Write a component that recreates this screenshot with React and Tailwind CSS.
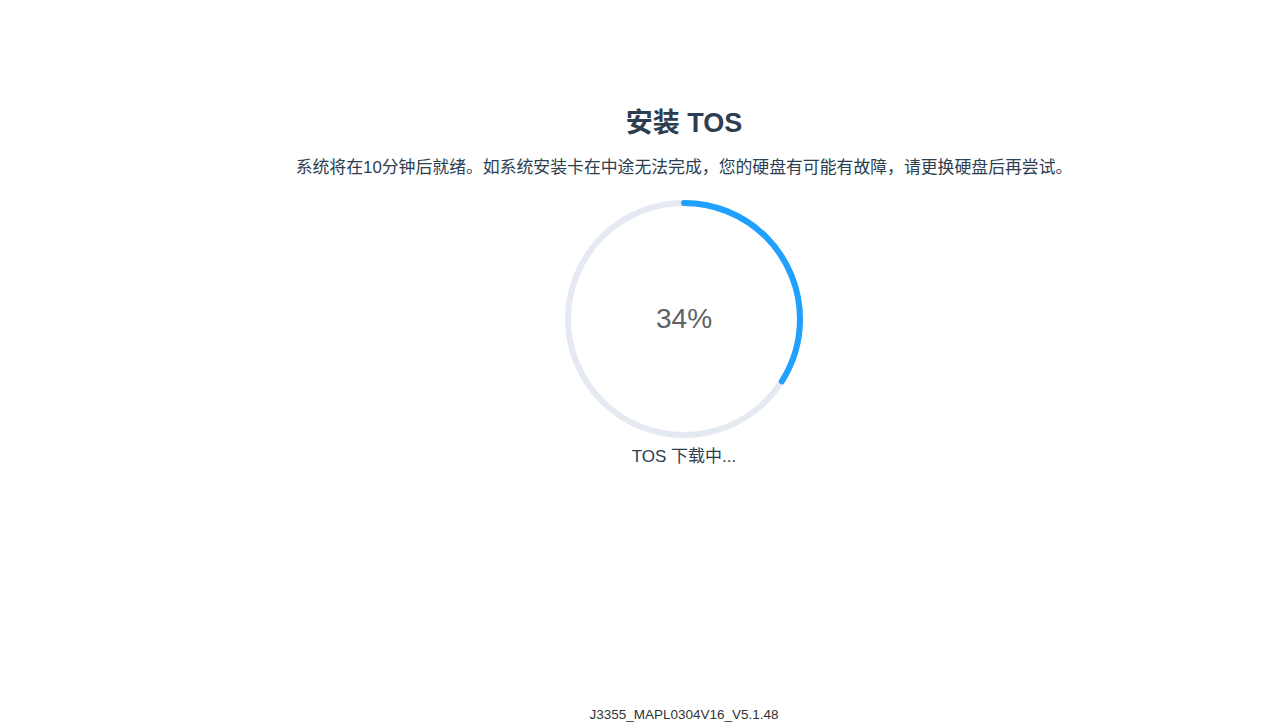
const FONT = "font-['Liberation_Sans','Noto_Sans_CJK_SC',sans-serif]";

function ProgressRing({ percent }) {
  const size = 238;
  const stroke = 6;
  const r = (size - stroke) / 2;
  const c = 2 * Math.PI * r;
  return (
    <div className="relative h-[238px] w-[238px]">
      <svg width={size} height={size} viewBox={`0 0 ${size} ${size}`} className="-rotate-90">
        <circle cx={size / 2} cy={size / 2} r={r} fill="none" stroke="#e5e9f2" strokeWidth={stroke} />
        <circle
          cx={size / 2}
          cy={size / 2}
          r={r}
          fill="none"
          stroke="#20a0ff"
          strokeWidth={stroke}
          strokeLinecap="round"
          strokeDasharray={`${(c * percent) / 100} ${c}`}
        />
      </svg>
      <div className="absolute inset-0 flex items-center justify-center text-[28px] text-[#606266]">
        {percent}%
      </div>
    </div>
  );
}

export default function App() {
  return (
    <div className={`flex min-h-screen flex-col items-center bg-white pl-[88px] text-[#2c3e50] ${FONT}`}>
      <h1 className="mt-[103px] text-[27px] font-bold leading-[40px]">安装 TOS</h1>
      <p className="mt-[13px] text-[16.85px] leading-[24px]">
        系统将在10分钟后就绪。如系统安装卡在中途无法完成，您的硬盘有可能有故障，请更换硬盘后再尝试。
      </p>
      <div className="mt-[20px]">
        <ProgressRing percent={34} />
      </div>
      <div className="mt-[7px] text-[17px] leading-[24px]">TOS 下载中...</div>
      <footer className="mt-auto pb-[4px] text-[13.5px] leading-[16px] text-[#333]">
        J3355_MAPL0304V16_V5.1.48
      </footer>
    </div>
  );
}
